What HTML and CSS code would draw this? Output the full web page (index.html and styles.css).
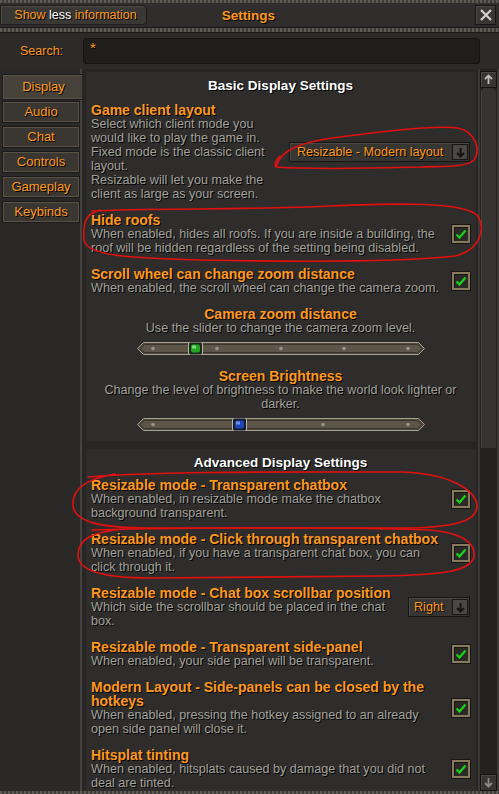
FILE: index.html
```html
<!DOCTYPE html>
<html lang="en">
  <head>
    <meta charset="utf-8" />
    <title>Settings</title>
    <link rel="stylesheet" href="styles.css">
  </head>
  <body>
    <div class="window">
      <div class="stone thin"></div>
      <header class="titlebar">
        <button class="info-btn"><span class="o">Show</span> <span class="w">less</span> <span class="o">information</span></button>
        <h1>Settings</h1>
        <button class="close">
          <svg width="14" height="14" viewBox="0 0 14 14"><path d="M2 2 L12 12 M12 2 L2 12" stroke="#d2d0cb" stroke-width="2.2" /></svg>
        </button>
      </header>
      <div class="stone"></div>
      <div class="search">
        <div class="search-label">Search:</div>
        <div class="search-box">*</div>
      </div>

      <div class="main">
        <nav class="tabs">
          <div class="tab active">Display</div>
          <div class="tab">Audio</div>
          <div class="tab">Chat</div>
          <div class="tab">Controls</div>
          <div class="tab">Gameplay</div>
          <div class="tab">Keybinds</div>
        </nav>

        <div class="content">
          <section class="group">
            <h2>Basic Display Settings</h2>
            <div class="setting">
              <div class="text">
                <h3>Game client layout</h3>
                <p>Select which client mode you<br>would like to play the game in.<br>Fixed mode is the classic client<br>layout.<br>Resizable will let you make the<br>client as large as your screen.</p>
              </div>
              <div class="dropdown wide">
                <span>Resizable - Modern layout</span>
                <i class="drop-arrow"><svg width="11" height="11" viewBox="0 0 11 11"><path d="M5.5 1 V9 M2 6 L5.5 9.5 L9 6" stroke="#151413" stroke-width="2" fill="none" /></svg></i>
              </div>
            </div>
            <div class="setting">
              <div class="text">
                <h3>Hide roofs</h3>
                <p>When enabled, hides all roofs. If you are inside a building, the<br>roof will be hidden regardless of the setting being disabled.</p>
              </div>
              <div class="check"><svg width="12" height="10" viewBox="0 0 12 10"><path d="M1.5 5.5 L4.5 8.5 L10.5 1.5" stroke="#16d416" stroke-width="2.2" fill="none" /></svg></div>
            </div>
            <div class="setting">
              <div class="text">
                <h3>Scroll wheel can change zoom distance</h3>
                <p>When enabled, the scroll wheel can change the camera zoom.</p>
              </div>
              <div class="check"><svg width="12" height="10" viewBox="0 0 12 10"><path d="M1.5 5.5 L4.5 8.5 L10.5 1.5" stroke="#16d416" stroke-width="2.2" fill="none" /></svg></div>
            </div>
            <div class="setting centered">
              <h3>Camera zoom distance</h3>
              <p>Use the slider to change the camera zoom level.</p>
              <svg class="slider" width="288" height="13" viewBox="0 0 288 13">
                <polygon points="0.5,6.5 6.5,0.5 281.5,0.5 287.5,6.5 281.5,12.5 6.5,12.5" fill="#4f483d" stroke="#aaa28e" />
                <polygon points="3,6.5 7.5,2.5 280.5,2.5 285,6.5 280.5,10.5 7.5,10.5" fill="#5d5548" stroke="#3a352d" />
                <circle cx="16" cy="6.5" r="1.8" fill="#9a958b" /><circle cx="80" cy="6.5" r="1.8" fill="#9a958b" />
                <circle cx="144" cy="6.5" r="1.8" fill="#9a958b" /><circle cx="207" cy="6.5" r="1.8" fill="#9a958b" />
                <circle cx="271" cy="6.5" r="1.8" fill="#9a958b" />
                <rect x="51.5" y="0" width="14" height="13" rx="2" fill="#1c2a1c" stroke="#b9b6ae" />
                <rect x="54" y="2.5" width="9" height="8" rx="2" fill="#23a523" />
                <rect x="55" y="3.5" width="4" height="3" fill="#7be07b" />
              </svg>
            </div>
            <div class="setting centered">
              <h3>Screen Brightness</h3>
              <p>Change the level of brightness to make the world look lighter or<br>darker.</p>
              <svg class="slider" width="288" height="13" viewBox="0 0 288 13">
                <polygon points="0.5,6.5 6.5,0.5 281.5,0.5 287.5,6.5 281.5,12.5 6.5,12.5" fill="#4f483d" stroke="#aaa28e" />
                <polygon points="3,6.5 7.5,2.5 280.5,2.5 285,6.5 280.5,10.5 7.5,10.5" fill="#5d5548" stroke="#3a352d" />
                <circle cx="16" cy="6.5" r="1.8" fill="#9a958b" /><circle cx="186" cy="6.5" r="1.8" fill="#9a958b" />
                <circle cx="271" cy="6.5" r="1.8" fill="#9a958b" />
                <rect x="95.5" y="0" width="14" height="13" rx="2" fill="#151c2c" stroke="#b9b6ae" />
                <rect x="98" y="2.5" width="9" height="8" rx="2" fill="#1e46b4" />
                <rect x="99" y="3.5" width="4" height="3" fill="#6f8fe6" />
              </svg>
            </div>
          </section>

          <section class="group">
            <h2>Advanced Display Settings</h2>
            <div class="setting">
              <div class="text">
                <h3>Resizable mode - Transparent chatbox</h3>
                <p>When enabled, in resizable mode make the chatbox<br>background transparent.</p>
              </div>
              <div class="check"><svg width="12" height="10" viewBox="0 0 12 10"><path d="M1.5 5.5 L4.5 8.5 L10.5 1.5" stroke="#16d416" stroke-width="2.2" fill="none" /></svg></div>
            </div>
            <div class="setting">
              <div class="text">
                <h3>Resizable mode - Click through transparent chatbox</h3>
                <p>When enabled, if you have a transparent chat box, you can<br>click through it.</p>
              </div>
              <div class="check"><svg width="12" height="10" viewBox="0 0 12 10"><path d="M1.5 5.5 L4.5 8.5 L10.5 1.5" stroke="#16d416" stroke-width="2.2" fill="none" /></svg></div>
            </div>
            <div class="setting">
              <div class="text">
                <h3>Resizable mode - Chat box scrollbar position</h3>
                <p>Which side the scrollbar should be placed in the chat<br>box.</p>
              </div>
              <div class="dropdown">
                <span>Right</span>
                <i class="drop-arrow"><svg width="11" height="11" viewBox="0 0 11 11"><path d="M5.5 1 V9 M2 6 L5.5 9.5 L9 6" stroke="#151413" stroke-width="2" fill="none" /></svg></i>
              </div>
            </div>
            <div class="setting">
              <div class="text">
                <h3>Resizable mode - Transparent side-panel</h3>
                <p>When enabled, your side panel will be transparent.</p>
              </div>
              <div class="check"><svg width="12" height="10" viewBox="0 0 12 10"><path d="M1.5 5.5 L4.5 8.5 L10.5 1.5" stroke="#16d416" stroke-width="2.2" fill="none" /></svg></div>
            </div>
            <div class="setting">
              <div class="text">
                <h3>Modern Layout - Side-panels can be closed by the<br>hotkeys</h3>
                <p>When enabled, pressing the hotkey assigned to an already<br>open side panel will close it.</p>
              </div>
              <div class="check"><svg width="12" height="10" viewBox="0 0 12 10"><path d="M1.5 5.5 L4.5 8.5 L10.5 1.5" stroke="#16d416" stroke-width="2.2" fill="none" /></svg></div>
            </div>
            <div class="setting">
              <div class="text">
                <h3>Hitsplat tinting</h3>
                <p>When enabled, hitsplats caused by damage that you did not<br>deal are tinted.</p>
              </div>
              <div class="check"><svg width="12" height="10" viewBox="0 0 12 10"><path d="M1.5 5.5 L4.5 8.5 L10.5 1.5" stroke="#16d416" stroke-width="2.2" fill="none" /></svg></div>
            </div>
          </section>
        </div>

        <div class="scrollbar">
          <div class="arrow"><svg width="11" height="11" viewBox="0 0 11 11"><path d="M5.5 10 V2 M2 5 L5.5 1.5 L9 5" stroke="#bdbab4" stroke-width="1.8" fill="none" /></svg></div>
          <div class="track"><div class="thumb"></div></div>
          <div class="arrow"><svg width="11" height="11" viewBox="0 0 11 11"><path d="M5.5 1 V9 M2 6 L5.5 9.5 L9 6" stroke="#8e8b85" stroke-width="1.8" fill="none" /></svg></div>
        </div>
      </div>
      <div class="stone thin"></div>

      <!-- hand drawn red marks over the screenshot -->
      <svg class="marks" width="499" height="794" viewBox="0 0 499 794">
        <g fill="none" stroke="#e3100f" stroke-width="1.6" stroke-linecap="round">
          <path d="M276,167 C280,150 300,142 340,137 C380,132 430,125 458,128 C476,132 481,150 474,160 C466,168 440,166 420,167 C380,168 320,170 276,167 C274,164 276,160 280,156" />
          <path d="M92,211 C150,208 250,210 330,206 C400,203 462,202 477,215 C486,228 481,250 455,256 C400,262 300,262 200,260 C130,258 86,256 84,240 C83,225 84,214 100,210" />
          <path d="M88,477 C150,471 300,472 400,472 C450,473 475,490 477,505 C478,521 455,528 400,528 L150,528 C100,528 74,522 73,505 C72,489 85,479 115,474" />
          <path d="M92,530 C200,527 350,527 430,530 C465,533 476,545 474,557 C470,572 440,575 380,576 L150,578 C100,578 78,570 78,555 C78,540 90,532 125,529" />
        </g>
      </svg>
    </div>
  </body>
</html>
```

FILE: styles.css
```css
body, html {
  margin: 0;
  padding: 0;
  background-color: #2c2b29;
  font-family: "Liberation Sans", Arial, sans-serif;
  font-size: 12px;
}
.window {
  position: relative;
  width: 499px;
  height: 794px;
  overflow: hidden;
  display: flex;
  flex-direction: column;
  background-color: #2c2b29;
}
.stone {
  height: 4px;
  flex: none;
  background: repeating-linear-gradient(90deg, #5e5b57 0 2px, #3e3b38 2px 4px);
  border-top: 1px solid #1a1918;
  border-bottom: 1px solid #1a1918;
}
.stone.thin {
  height: 3px;
  border: 0;
}

/* title row */
.titlebar {
  height: 22px;
  padding: 1px 2px 1px 0;
  display: grid;
  grid-template-columns: 1fr auto 1fr;
  align-items: center;
  background-color: #2f2e2c;
}
.info-btn {
  width: 147px;
  height: 20px;
  padding: 0 0 0 4px;
  font: inherit;
  font-size: 12.5px;
  background-color: #3a3835;
  border: 1px solid #1d1c1b;
  border-radius: 0 4px 4px 0;
  box-shadow: inset 1px 1px 0 #4e4b47;
  text-align: center;
  text-shadow: 1px 1px 0 #000;
}
.o { color: #ff981f; }
.w { color: #ffffff; }
.titlebar h1 {
  margin: 0;
  text-align: center;
  font-size: 13.5px;
  color: #ff981f;
  text-shadow: 1px 1px 0 #000;
}
.close {
  justify-self: end;
  width: 21px;
  height: 20px;
  padding: 0;
  margin-right: 1px;
  display: flex;
  align-items: center;
  justify-content: center;
  background-color: #383735;
  border: 1px solid #161514;
  box-shadow: inset 1px 1px 0 #4d4b48;
}

/* search */
.search {
  height: 36px;
  display: flex;
  align-items: center;
  padding-left: 20px;
  background-color: #2c2b29;
}
.search-label {
  width: 63px;
  flex: none;
  color: #ff981f;
  font-size: 12.5px;
  text-shadow: 1px 1px 0 #000;
}
.search-box {
  width: 397px;
  height: 26px;
  flex: none;
  box-sizing: border-box;
  padding: 2px 6px;
  background-color: #1f1e1d;
  border: 1px solid #161514;
  border-radius: 3px;
  color: #ff981f;
  font-size: 15px;
  line-height: 14px;
  text-shadow: 1px 1px 0 #000;
}

/* body */
.main {
  flex: 1;
  min-height: 0;
  display: flex;
}
.tabs {
  width: 82px;
  flex: none;
  padding-top: 6px;
  box-sizing: border-box;
  display: flex;
  flex-direction: column;
  gap: 5px;
  background-color: #2a2927;
  border-right: 2px solid #454341;
}
.tab {
  width: 76px;
  height: 20px;
  margin-left: 3px;
  box-sizing: border-box;
  line-height: 18px;
  text-align: center;
  color: #ff981f;
  font-size: 13px;
  text-shadow: 1px 1px 0 #000;
  background-color: #3a3732;
  border: 1px solid #5a5244;
  box-shadow: 0 0 0 1px #1b1a18;
}
.tab.active {
  width: 81px;
  height: 24px;
  line-height: 22px;
  background-color: #474239;
  margin-bottom: -2px;
}

.content {
  flex: 1;
  min-width: 0;
  overflow: hidden;
  padding: 3px 2px 0 4px;
  display: flex;
  flex-direction: column;
  gap: 8px;
  background-color: #272624;
  border-right: 2px solid #3a3937;
}
.group {
  padding: 7px 6px 6px 5px;
  background-color: #2e2d2b;
}
.group h2 {
  margin: 0 0 10px;
  text-align: center;
  font-size: 13.5px;
  line-height: 14px;
  color: #ffffff;
  text-shadow: 1px 1px 0 #000;
}
.group + .group h2 {
  margin-bottom: 8px;
}
.setting {
  display: flex;
  align-items: center;
  margin-bottom: 12px;
}
.setting .text {
  flex: 1;
  min-width: 0;
  white-space: nowrap;
}
.setting h3 {
  margin: 0;
  font-size: 14px;
  line-height: 14px;
  color: #ff981f;
  text-shadow: 1px 1px 0 #000;
}
.setting p {
  margin: 0;
  font-size: 12.6px;
  line-height: 14px;
  color: #a3a19b;
  text-shadow: 1px 1px 0 #000;
}
.setting.centered {
  flex-direction: column;
  text-align: center;
  margin-bottom: 14px;
}
.setting.centered:last-child {
  margin-bottom: 4px;
}
.slider {
  display: block;
  margin-top: 7px;
}

.check {
  width: 18px;
  height: 18px;
  flex: none;
  box-sizing: border-box;
  display: flex;
  align-items: center;
  justify-content: center;
  background-color: #2b2a27;
  border: 2px solid #8a7a5c;
  box-shadow: 0 0 0 1px #171614, inset 1px 1px 0 #171614;
}

.dropdown {
  width: 62px;
  height: 20px;
  flex: none;
  box-sizing: border-box;
  display: flex;
  align-items: center;
  justify-content: space-between;
  padding: 0 1px 0 5px;
  background-color: #383633;
  border: 1px solid #161514;
  box-shadow: inset 1px 1px 0 #4c4a46;
  color: #ff981f;
  font-size: 12.6px;
  text-shadow: 1px 1px 0 #000;
}
.dropdown.wide {
  width: 181px;
  padding-left: 7px;
}
.drop-arrow {
  width: 16px;
  height: 16px;
  box-sizing: border-box;
  display: flex;
  align-items: center;
  justify-content: center;
  background-color: #4a4845;
  border: 1px solid #161514;
}

.scrollbar {
  width: 17px;
  flex: none;
  padding-top: 2px;
  display: flex;
  flex-direction: column;
  background-color: #232221;
  border-right: 2px solid #3c3a38;
}
.arrow {
  height: 17px;
  flex: none;
  box-sizing: border-box;
  display: flex;
  align-items: center;
  justify-content: center;
  background-color: #363533;
  border: 1px solid #141312;
  box-shadow: inset 1px 1px 0 #4a4845;
}
.track {
  flex: 1;
  background-color: #232221;
}
.thumb {
  height: 360px;
  margin: 0 1px;
  border-radius: 5px 5px 0 0;
  background-color: #353432;
  border-left: 1px solid #45433f;
}

.marks {
  position: absolute;
  left: 0;
  top: 0;
  pointer-events: none;
}
```
